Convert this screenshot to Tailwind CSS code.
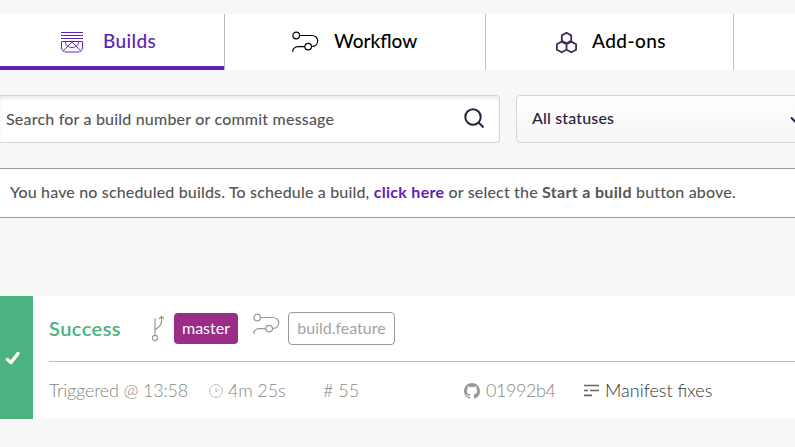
<!DOCTYPE html>
<html lang="en">
<head>
<meta charset="utf-8">
<title>Builds</title>
<script src="https://cdn.jsdelivr.net/npm/@tailwindcss/browser@4"></script>
</head>
<body class="h-[447px] w-[795px] overflow-hidden bg-[#f7f7f7] pt-[14px] font-['Lato','Open_Sans',sans-serif] whitespace-nowrap">
<nav class="flex h-[56px] w-full overflow-hidden bg-white text-[19px] leading-[24px] font-medium text-black">
  <a class="flex w-[225px] shrink-0 border-r border-[#bdbdbd] text-[#6123b5]">
    <span class="flex w-full border-b-4 border-[#5e25b3] pt-[15px] pl-[61px]">
      <svg class="mt-[3px] mr-[20px] h-[21px] w-[22px]" viewBox="0 0 22 21" fill="none" stroke="currentColor"><path d="M0 .5h22M0 3.500h22M0 6.500h22M.5 9.500h21v5.500c0 3.500-2 5-5 5h-11c-3 0-5-1.500-5-5zM4.500 9.500c0 4 3 6 6.500 6s6.500-2 6.500-6M2.500 18.500L11 10l8.500 8.500"/></svg>
      <span class="tracking-[0.4px]">Builds</span>
    </span>
  </a>
  <a class="flex w-[261px] shrink-0 border-r border-[#bdbdbd] pt-[15px] pl-[67px]">
    <svg class="mt-[2px] mr-[15px] h-[22px] w-[27px]" viewBox="0 0 27 22" fill="none" stroke="currentColor" stroke-width="1.200"><circle cx="4.200" cy="4.500" r="3.300"/><path d="M7.500 4.500H20c3 0 5.700 2.300 5.700 5.200 0 3.600-2.700 5.800-6.200 5.800M13 15.700H6c-3 0-5.400 2-5.400 5"/><circle cx="16.200" cy="15.600" r="3.300"/></svg>
    <span>Workflow</span>
  </a>
  <a class="flex w-[248px] shrink-0 border-r border-[#bdbdbd] pt-[15px] pl-[69px]">
    <svg class="mt-[2px] mr-[14px] h-[23px] w-[23px]" viewBox="0 0 23 23" fill="none" stroke="#412a5c" stroke-width="1.800" stroke-linejoin="round"><path d="M11.500 1.800l4.700 2.600v5.400l-4.700 2.600-4.700-2.600V4.400zM6.700 10.600l4.800 2.700v5.400l-4.800 2.600-4.800-2.600v-5.400zM16.300 10.600l4.800 2.700v5.400l-4.800 2.600-4.800-2.600v-5.400z"/></svg>
    <span class="tracking-[0.45px]">Add-ons</span>
  </a>
</nav>

<div class="mt-[25px] flex h-[48px] gap-4">
  <div class="flex w-[500px] shrink-0 items-center justify-between rounded-r-[4px] border-y border-r border-[#d6d6d6] bg-white pr-[14px] pl-[6px] text-[16px] font-medium tracking-[0.19px] text-[#555] shadow-[inset_0_3px_3px_rgba(0,0,0,0.07)]">
    <span>Search for a build number or commit message</span>
    <svg class="h-[22px] w-[22px]" viewBox="0 0 22 22" fill="none" stroke="#2b1e40" stroke-width="2"><circle cx="10" cy="9" r="7.700"/><path d="M15.300 14.300l5.200 5.200"/></svg>
  </div>
  <div class="flex w-[310px] shrink-0 justify-between rounded-[4px] border border-[#d6d6d6] bg-linear-to-b from-white to-[#f5f5f5] pt-[10px] pr-[23px] pl-[15px] text-[16px] font-medium tracking-[0.15px] text-[#2b1e40]">
    <span>All statuses</span>
    <svg class="mt-[10px] h-[8px] w-[12px]" viewBox="0 0 12 8" fill="none" stroke="currentColor" stroke-width="2"><path d="M1 1.500l5 5 5-5"/></svg>
  </div>
</div>

<div class="mt-[25px] flex h-[50px] items-center border-y border-[#999] bg-white pb-[2px] pl-[10px] text-[16px] font-medium tracking-[0.16px] text-[#555]">
  <p>You have no scheduled builds. To schedule a build, <a class="font-bold tracking-[0.3px] text-[#6123b5]">click here</a> or select the <b class="font-bold tracking-[0.33px]">Start a build</b> button above.</p>
</div>

<article class="mt-[78px] flex h-[123px] bg-white">
  <div class="flex w-[33px] shrink-0 items-center justify-center bg-[#4ab381]">
    <svg class="mr-[7px] h-[14px] w-[16px]" viewBox="0 0 16 14" fill="none" stroke="#fff" stroke-width="3.500" stroke-linecap="round" stroke-linejoin="round"><path d="M2.500 8.500l3.500 3 7-9"/></svg>
  </div>
  <div class="ml-4 flex grow flex-col">
    <div class="flex h-[66px] items-start border-b border-[#bdbdbd]">
      <h2 class="mt-[20px] w-[102px] text-[20px] leading-[24px] font-semibold tracking-[0.45px] text-[#4ab381]">Success</h2>
      <svg class="mt-[19px] h-[27px] w-[13px]" viewBox="0 0 13 27" fill="none" stroke="#999" stroke-width="1.200"><path d="M4 20V3M4 15c3-3 6.500-4 6.500-8V1.500M8 4l2.500-2.700L13 4"/><circle cx="4" cy="23" r="2.600"/></svg>
      <span class="mt-[17px] ml-[10px] flex h-[31px] w-[64px] items-center justify-center rounded-[4px] bg-[#9b2d87] pb-px text-[16px] text-white">master</span>
      <svg class="mt-[17px] ml-[15px] h-[22px] w-[27px]" viewBox="0 0 27 22" fill="none" stroke="#999" stroke-width="1.200"><circle cx="4.200" cy="4.500" r="3.300"/><path d="M7.500 4.500H20c3 0 5.700 2.300 5.700 5.200 0 3.600-2.700 5.800-6.200 5.800M13 15.700H6c-3 0-5.400 2-5.400 5"/><circle cx="16.200" cy="15.600" r="3.300"/></svg>
      <span class="mt-[16px] ml-[8px] flex h-[33px] w-[107px] items-center justify-center rounded-[4px] border border-[#999] pb-px text-[16px] text-[#a3a3a3]">build.feature</span>
    </div>
    <div class="flex h-[57px] items-center text-[18px] font-light text-[#888]">
      <span class="w-[160px] tracking-[-0.18px]">Triggered @ 13:58</span>
      <svg class="mr-[5px] h-[14px] w-[14px]" viewBox="0 0 14 14" fill="none" stroke="#bbb"><circle cx="7" cy="7" r="6.400"/><path d="M7 3.500V8l3-2.500"/></svg>
      <span class="w-[95px] tracking-[-0.15px]">4m 25s</span>
      <span class="w-[141px]"># 55</span>
      <svg class="mr-[6px] h-[16px] w-[16px]" viewBox="0 0 16 16" fill="#999"><path d="M8 0C3.580 0 0 3.580 0 8c0 3.540 2.290 6.530 5.470 7.590.4.070.55-.17.55-.38 0-.19-.01-.82-.01-1.490-2.010.37-2.530-.49-2.690-.94-.09-.23-.48-.94-.82-1.130-.28-.15-.68-.52-.01-.53.63-.01 1.080.58 1.230.82.72 1.210 1.870.87 2.330.66.070-.52.280-.87.510-1.070-1.780-.2-3.640-.89-3.640-3.950 0-.87.310-1.590.820-2.150-.08-.2-.36-1.020.08-2.120 0 0 .67-.21 2.200.82a7.600 7.600 0 014 0c1.530-1.040 2.200-.82 2.200-.82.440 1.100.160 1.920.080 2.120.51.560.820 1.270.820 2.150 0 3.070-1.870 3.750-3.650 3.950.29.250.54.730.54 1.480 0 1.070-.01 1.930-.01 2.200 0 .21.150.46.550.38A8 8 0 0016 8c0-4.420-3.580-8-8-8z"/></svg>
      <span class="w-[98px] tracking-[-0.45px]">01992b4</span>
      <svg class="mr-[6px] h-[13px] w-[15px]" viewBox="0 0 15 13" fill="none" stroke="#666" stroke-width="1.700"><path d="M0 1.500h15M0 6.500h4M6 6.500h9M0 11.300h8"/></svg>
      <span class="text-[#333]">Manifest fixes</span>
    </div>
  </div>
</article>
</body>
</html>
